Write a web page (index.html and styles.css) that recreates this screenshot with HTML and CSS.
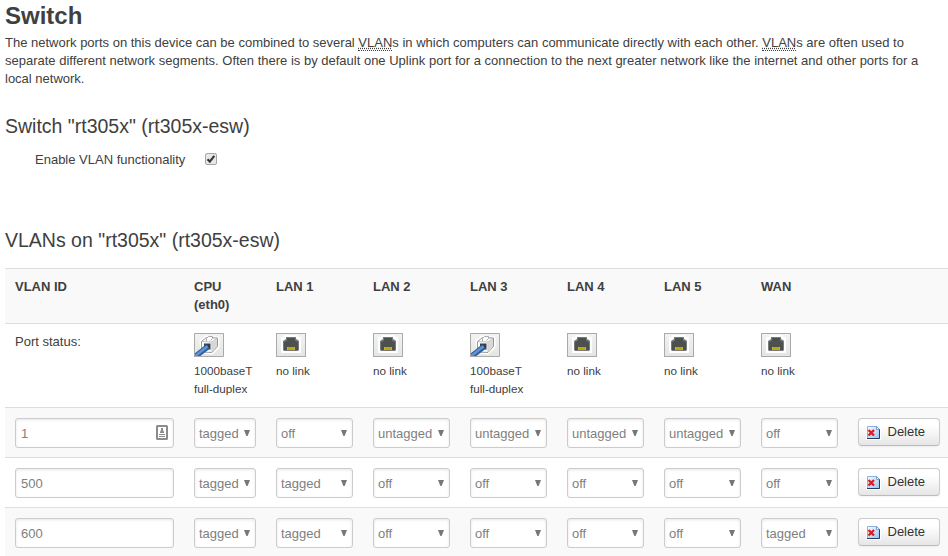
FILE: index.html
```html
<!DOCTYPE html>
<html lang="en">
<head>
<meta charset="utf-8">
<title>Switch</title>
<link rel="stylesheet" href="styles.css">
</head>
<body>
<svg class="defs" aria-hidden="true">
  <linearGradient id="bg" x2="0" y2="1"><stop stop-color="#f1f2f1"/><stop offset="1" stop-color="#e4e6e3"/></linearGradient>
  <linearGradient id="page" x2="1" y2="1"><stop stop-color="#ffffff"/><stop offset="1" stop-color="#8ec0f4"/></linearGradient>
  <symbol id="link" viewBox="0 0 30 24">
    <path fill="url(#bg)" d="M1 1h28v22H1z"/>
    <path fill="#fff" stroke="#fff" stroke-width="3" stroke-linejoin="round" d="M7 8l5-4 12 1v9l-6 6-10-1z"/>
    <path fill="#fafafa" stroke="#999" stroke-linejoin="round" d="M7.500 8.500l5-4 11 .5v8.500L18 19.500l-10.500-.5z"/>
    <path fill="#d8d8d8" d="M18.500 9.500l4.500-4v8l-4.500 5z"/>
    <path fill="none" stroke="#b4b4b4" stroke-width=".8" d="M8 8.500l10 .5v10M18 9l5-4"/>
    <path fill="#fff" stroke="#aaa" d="M12.500 8V5.500l2-2h4v2l-2 2"/>
    <path fill="#333d49" d="M10 10.500h6.500v6H10z"/>
    <path fill="none" stroke="#2f5f9f" stroke-width="5.500" d="M0 24.500L14 13.500"/>
    <path fill="none" stroke="#6295d2" stroke-width="2.500" d="M0 24L13.500 13.300"/>
    <path fill="none" stroke="#aaa" d="M.5.5h29v23H.5z"/>
  </symbol>
  <symbol id="nolink" viewBox="0 0 30 24">
    <path fill="#aaa" d="M0 0h30v24H0z"/><path fill="url(#bg)" d="M1 1h28v22H1z"/>
    <path fill="#fff" stroke="#fff" stroke-width="2" stroke-linejoin="round" d="M9 3h12v2h3v14H6V5h3z"/>
    <path fill="#777b79" d="M10 4h10v2l2 1 1 1v9l-1 1H8l-1-1V8l3-2z"/>
    <path fill="#4c504e" d="M11 5h8v2.500l3 1.500v8H8V9l3-1.500z"/>
    <path fill="#d4b500" d="M11 14h8v3h-8z"/>
    <path stroke="#817522" stroke-width=".5" d="M13 14v3m2-3v3m2-3v3"/>
  </symbol>
  <symbol id="arrow" viewBox="0 0 6 6"><path fill="#777" d="M0 0h6L3.600 6H2.400z"/></symbol>
  <symbol id="remove" viewBox="0 0 16 16">
    <path fill="#fff" d="M0 1h15v15H0z"/>
    <path fill="url(#page)" d="M1 2h10l3 3v10H1z"/>
    <path fill="none" stroke="#8db3dd" d="M1.500 15V2.500H11"/>
    <path fill="none" stroke="#263f69" d="M1 14.500h12.500V5"/>
    <path fill="#fff" stroke="#5684bb" stroke-width=".7" d="M10.500 2.500v3h3z"/>
    <path fill="none" stroke="#d91c20" stroke-width="2.300" d="M2.500 6l5.500 5.500M8 6l-5.500 5.500"/>
  </symbol>
</svg>
<main>
  <h1>Switch</h1>
  <p class="intro">The network ports on this device can be combined to several <abbr>VLAN</abbr>s in which computers can communicate directly with each other. <abbr>VLAN</abbr>s are often used to separate different network segments. Often there is by default one Uplink port for a connection to the next greater network like the internet and other ports for a local network.</p>
  <section class="options">
    <h2>Switch "rt305x" (rt305x-esw)</h2>
    <label class="enable"><span>Enable VLAN functionality</span>
      <svg class="check" viewBox="0 0 12 12"><rect x=".5" y=".5" width="11" height="11" rx="1.500" fill="#e8e8e8" stroke="#a5a5a5"/><path d="M2.500 6.300l2.300 2.300L9.300 2.800" fill="none" stroke="#383838" stroke-width="2.200"/></svg>
    </label>
  </section>
  <section>
    <h2>VLANs on "rt305x" (rt305x-esw)</h2>
    <div class="table">
      <div class="row head shade"><b>VLAN ID</b><b>CPU (eth0)</b><b>LAN 1</b><b>LAN 2</b><b>LAN 3</b><b>LAN 4</b><b>LAN 5</b><b>WAN</b></div>
      <div class="row ports">
        <div>Port status:</div>
        <div class="port"><svg><use href="#link"/></svg>1000baseT<br>full-duplex</div>
        <div class="port"><svg><use href="#nolink"/></svg>no link</div>
        <div class="port"><svg><use href="#nolink"/></svg>no link</div>
        <div class="port"><svg><use href="#link"/></svg>100baseT<br>full-duplex</div>
        <div class="port"><svg><use href="#nolink"/></svg>no link</div>
        <div class="port"><svg><use href="#nolink"/></svg>no link</div>
        <div class="port"><svg><use href="#nolink"/></svg>no link</div>
      </div>
      <div class="row vlan shade">
        <div class="field">1<svg class="contact" viewBox="0 0 12 15"><rect x="1" y="1" width="10" height="13" rx=".5" fill="#fff" stroke="#8b8b8b" stroke-width="2"/><path fill="#8b8b8b" d="M5 3h2v2l1 2v1H4V7l1-2zM3 9h6v1H3zM3 11h6v1H3z"/></svg></div>
        <div class="field">tagged<svg><use href="#arrow"/></svg></div>
        <div class="field">off<svg><use href="#arrow"/></svg></div>
        <div class="field">untagged<svg><use href="#arrow"/></svg></div>
        <div class="field">untagged<svg><use href="#arrow"/></svg></div>
        <div class="field">untagged<svg><use href="#arrow"/></svg></div>
        <div class="field">untagged<svg><use href="#arrow"/></svg></div>
        <div class="field">off<svg><use href="#arrow"/></svg></div>
        <button><svg><use href="#remove"/></svg>Delete</button>
      </div>
      <div class="row vlan">
        <div class="field">500</div>
        <div class="field">tagged<svg><use href="#arrow"/></svg></div>
        <div class="field">tagged<svg><use href="#arrow"/></svg></div>
        <div class="field">off<svg><use href="#arrow"/></svg></div>
        <div class="field">off<svg><use href="#arrow"/></svg></div>
        <div class="field">off<svg><use href="#arrow"/></svg></div>
        <div class="field">off<svg><use href="#arrow"/></svg></div>
        <div class="field">off<svg><use href="#arrow"/></svg></div>
        <button><svg><use href="#remove"/></svg>Delete</button>
      </div>
      <div class="row vlan shade">
        <div class="field">600</div>
        <div class="field">tagged<svg><use href="#arrow"/></svg></div>
        <div class="field">tagged<svg><use href="#arrow"/></svg></div>
        <div class="field">off<svg><use href="#arrow"/></svg></div>
        <div class="field">off<svg><use href="#arrow"/></svg></div>
        <div class="field">off<svg><use href="#arrow"/></svg></div>
        <div class="field">off<svg><use href="#arrow"/></svg></div>
        <div class="field">tagged<svg><use href="#arrow"/></svg></div>
        <button><svg><use href="#remove"/></svg>Delete</button>
      </div>
    </div>
  </section>
</main>
</body>
</html>
```
FILE: styles.css
```css
* { box-sizing: border-box; }
body {
  margin: 0;
  overflow: hidden;
  background: #fff;
  color: #404040;
  font: 13px/18px "Liberation Sans", Arial, sans-serif;
}
.defs { position: absolute; width: 0; height: 0; }
main { padding-left: 5px; }
h1 { margin: 0 0 2px; font-size: 24px; line-height: 32px; }
.intro { margin: 0; padding-right: 20px; }
abbr { border-bottom: 1px dotted #404040; text-decoration: underline dotted; }
h2 { margin: 0; font-size: 19.5px; line-height: 36px; font-weight: normal; }
.options { height: 114px; margin-top: 20px; }
.enable { display: flex; align-items: center; gap: 20px; padding: 7px 0 0 30px; }
.check { width: 12px; height: 12px; margin-bottom: 2px; }
.table { margin-top: 10px; }
.row {
  display: grid;
  grid-template-columns: 159px 62px repeat(6, 77px) 82px;
  column-gap: 20px;
  align-items: start;
  padding: 9px 0 0 10px;
  border-top: 1px solid #ddd;
}
.shade { background: #f9f9f9; }
.head { height: 55px; }
.ports { height: 84px; }
.vlan { height: 50px; padding-top: 10px; }
.port { font-size: 11.7px; white-space: nowrap; }
.port svg { display: block; width: 30px; height: 24px; margin-bottom: 5px; }
.field {
  display: flex;
  align-items: center;
  justify-content: space-between;
  height: 30px;
  padding: 1px 5px 0 4px;
  border: 1px solid #ccc;
  border-radius: 3px;
  background: #fff;
  box-shadow: inset 0 1px 3px rgba(0, 0, 0, .1);
  color: #808080;
}
.field:first-child { padding-left: 5px; }
.field svg { width: 6px; height: 6px; margin-bottom: 2px; }
.field .contact { width: 12px; height: 15px; }
button {
  display: flex;
  align-items: center;
  gap: 6px;
  height: 28px;
  padding: 0 0 1px 6.500px;
  border: 1px solid #ccc;
  border-bottom-color: #bbb;
  border-radius: 4px;
  background: linear-gradient(#fff, #fff 25%, #e6e6e6);
  box-shadow: inset 0 1px 0 rgba(255, 255, 255, .2), 0 1px 2px rgba(0, 0, 0, .05);
  color: #333;
  font: inherit;
}
button svg { width: 16px; height: 16px; }
```
